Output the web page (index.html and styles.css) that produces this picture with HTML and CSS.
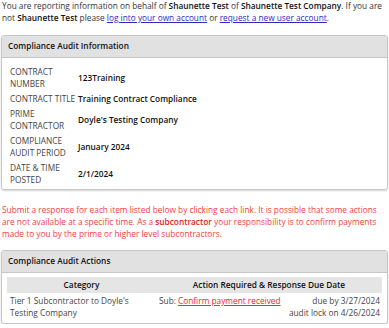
FILE: index.html
```html
<!DOCTYPE html>
<html>
<head>
  <meta charset="utf-8">
  <title>Compliance Audit</title>
  <link rel="stylesheet" href="styles.css">
</head>
<body>
  <p class="intro">You are reporting information on behalf of <strong>Shaunette Test</strong> of <strong>Shaunette Test Company</strong>. If you are not <strong>Shaunette Test</strong> please <a href="#">log into your own account</a> or <a href="#">request a new user account</a>.</p>

  <div class="panel">
    <div class="panel-heading">Compliance Audit Information</div>
    <div class="panel-body">
      <table class="info">
        <tr><th>CONTRACT NUMBER</th><td>123Training</td></tr>
        <tr><th>CONTRACT TITLE</th><td>Training Contract Compliance</td></tr>
        <tr><th>PRIME CONTRACTOR</th><td>Doyle's Testing Company</td></tr>
        <tr><th>COMPLIANCE AUDIT PERIOD</th><td>January 2024</td></tr>
        <tr><th>DATE &amp; TIME POSTED</th><td>2/1/2024</td></tr>
      </table>
    </div>
  </div>

  <p class="notice">Submit a response for each item listed below by clicking each link. It is possible that some actions are not available at a specific time. As a <strong>subcontractor</strong> your responsibility is to confirm payments made to you by the prime or higher level subcontractors.</p>

  <div class="panel">
    <div class="panel-heading">Compliance Audit Actions</div>
    <div class="panel-body actions-body">
      <table class="actions">
        <tr><th class="col-cat">Category</th><th>Action Required &amp; Response Due Date</th></tr>
        <tr>
          <td>Tier 1 Subcontractor to Doyle's Testing Company</td>
          <td>
            <div class="action">
              <span>Sub: <a href="#">Confirm payment received</a></span>
              <span class="dates">due by 3/27/2024<br>audit lock on 4/26/2024</span>
            </div>
          </td>
        </tr>
      </table>
    </div>
  </div>
</body>
</html>
```

FILE: styles.css
```css
body {
  font-family: 'Open Sans', Arial, sans-serif;
  font-size: 8.3px;
  line-height: 12px;
  color: #333;
  margin: 0;
  padding: 0 1px;
  background: white;
}
strong {
  font-weight: 600;
  color: #111;
}
a {
  color: #2b2bbd;
}
.intro {
  margin: 0 0 11px 1px;
}
.panel {
  border: 1px solid #c6c6c6;
  border-radius: 3px;
  box-shadow: 0 1px 2px rgba(0,0,0,0.18);
}
.panel-heading {
  background: #e1e1e1;
  border-bottom: 1px solid #c6c6c6;
  padding: 4px 6px 5px 6px;
  font-weight: 600;
  color: #111;
}
.panel-body {
  padding: 6px 8px 2px 8px;
}
.info {
  border-collapse: collapse;
}
.info th {
  text-align: left;
  font-weight: normal;
  color: #444;
  width: 66px;
  padding: 1.5px 2px 1.5px 0;
  vertical-align: middle;
}
.info td {
  font-weight: 600;
  color: #111;
  padding: 1.5px 0;
}
.notice {
  color: #ef3e3e;
  margin: 14px 0 10px 1px;
}
.notice strong {
  color: #e01b1b;
}
.actions-body {
  padding: 4px 5px 2px 5px;
}
.actions {
  width: 100%;
  border-collapse: collapse;
}
.actions th {
  background: #e5e5e5;
  font-weight: 600;
  color: #111;
  padding: 2px 2px;
}
.actions th.col-cat {
  width: 145px;
}
.actions td {
  vertical-align: top;
  padding: 2px 2px 2px 3px;
  color: #444;
}
.action {
  display: flex;
  justify-content: space-between;
}
.action a {
  color: #ff1a1a;
  text-decoration-color: #5b5bd6;
}
.dates {
  text-align: right;
}
```
